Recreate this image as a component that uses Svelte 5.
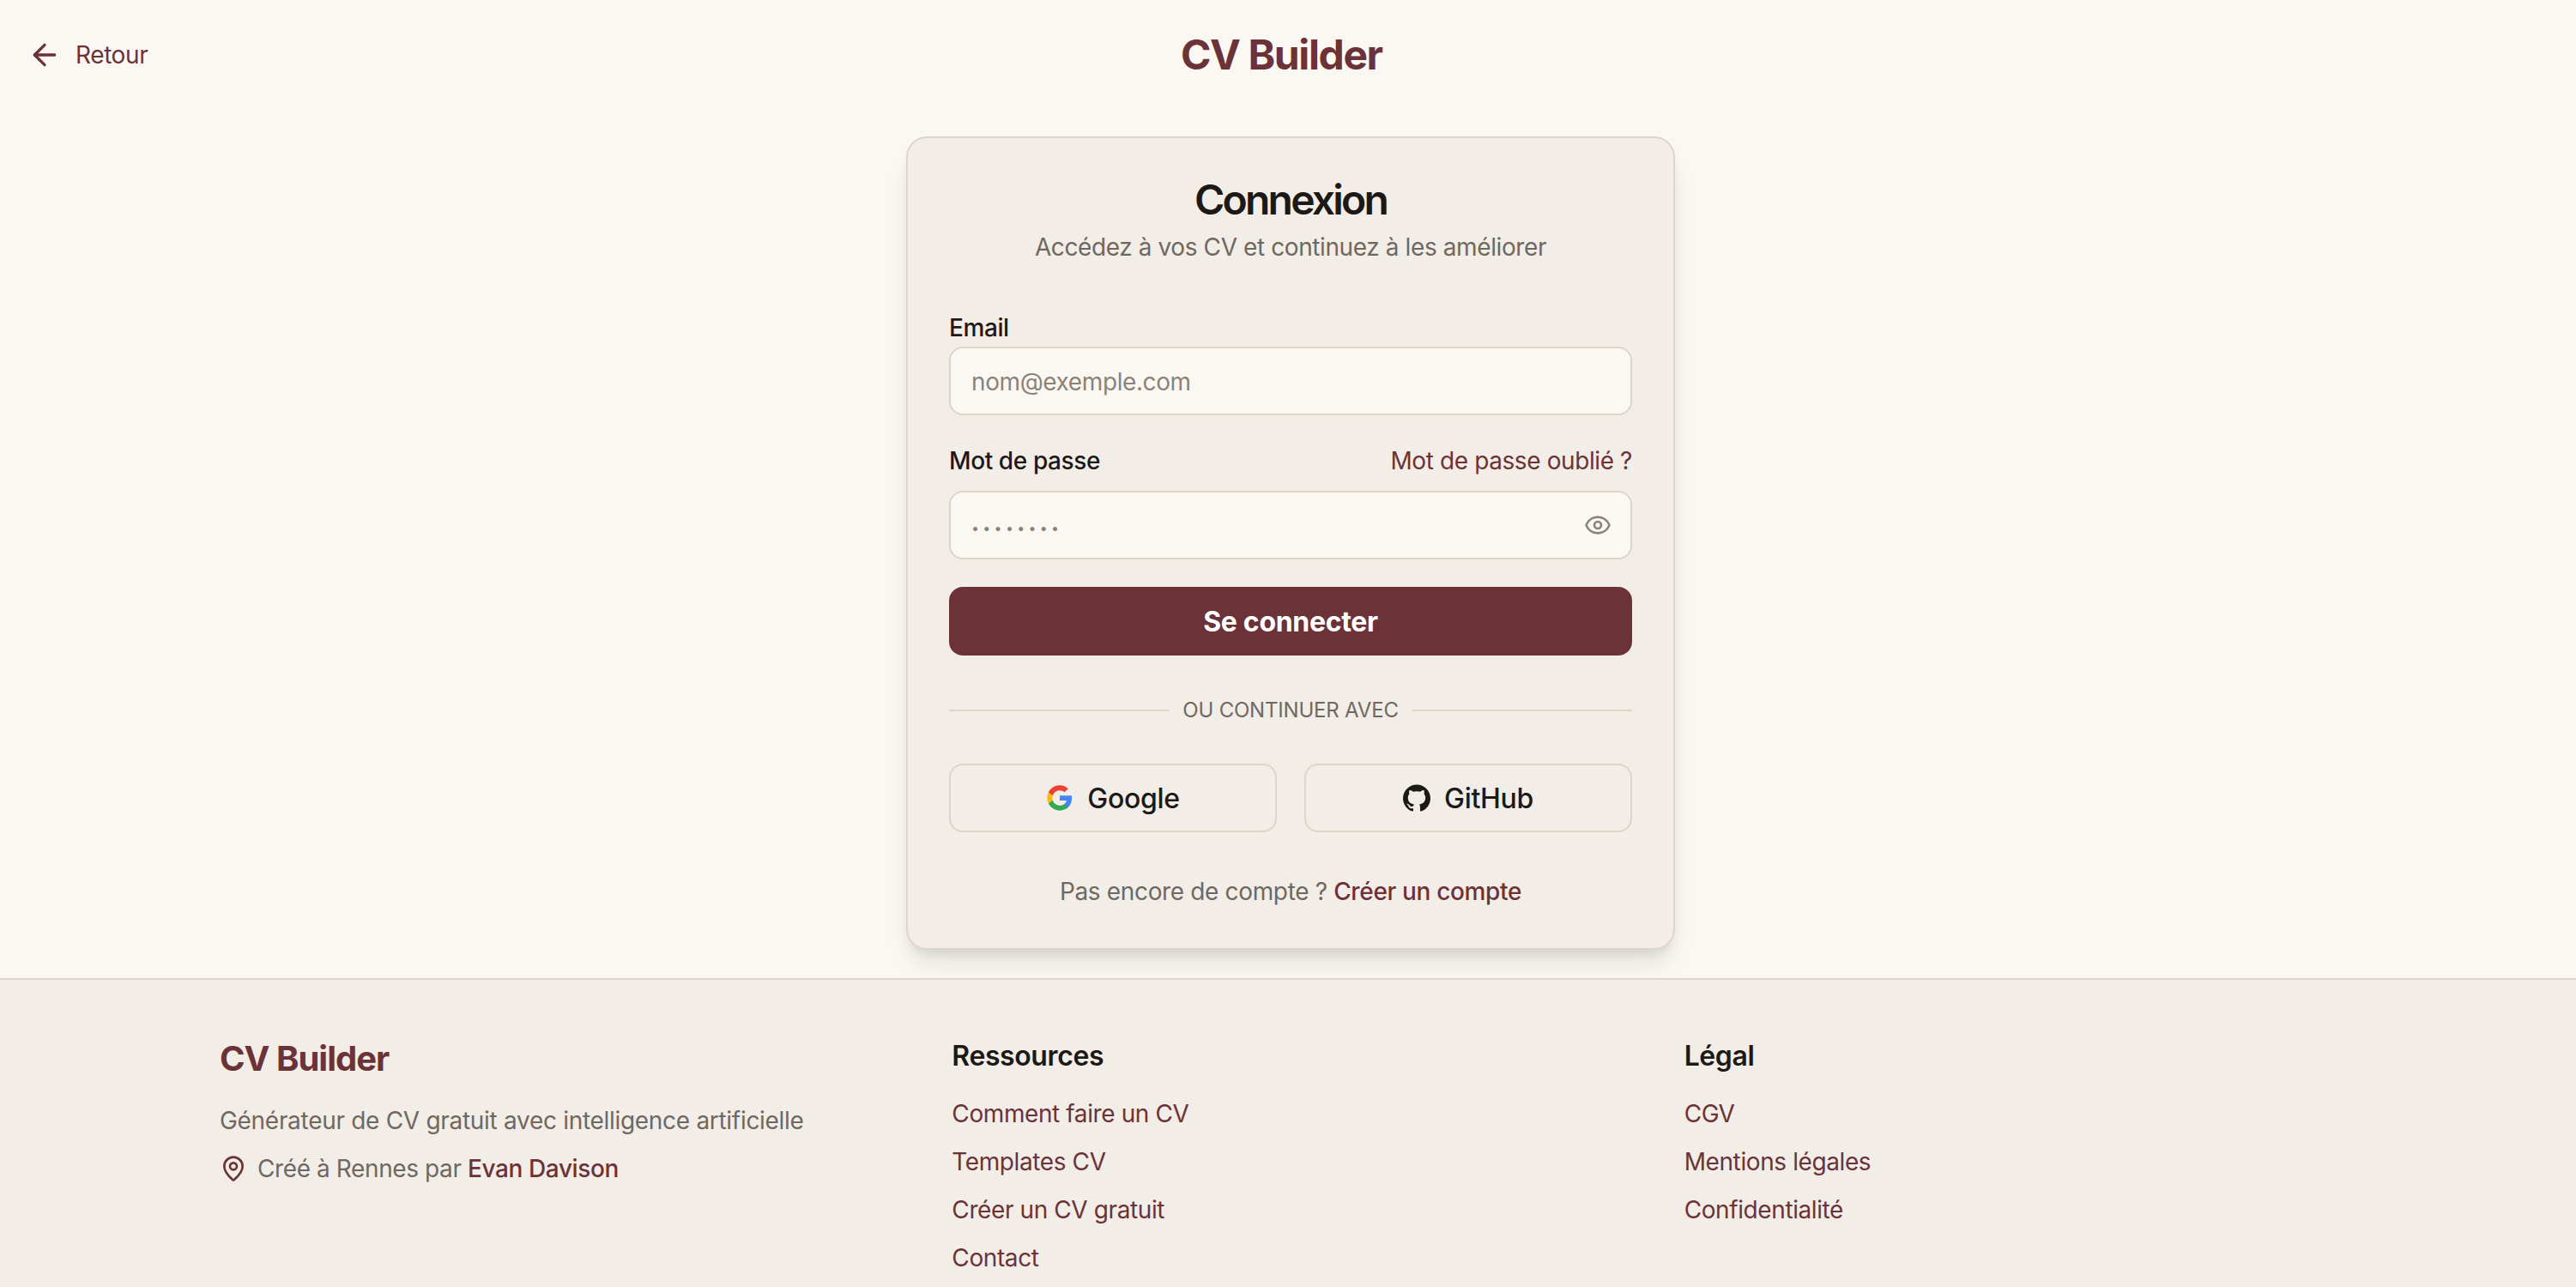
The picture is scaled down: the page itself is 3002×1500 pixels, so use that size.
<script lang="ts">
  const resources = ['Comment faire un CV', 'Templates CV', 'Créer un CV gratuit', 'Contact'];
  const legal = ['CGV', 'Mentions légales', 'Confidentialité'];
</script>

<div class="page">
  <header class="topbar">
    <a class="back" href="#retour">
      <svg width="40" height="40" viewBox="0 0 24 24" fill="none" stroke="currentColor" stroke-width="2" stroke-linecap="round" stroke-linejoin="round">
        <path d="m12 19-7-7 7-7" />
        <path d="M19 12H5" />
      </svg>
      <span>Retour</span>
    </a>
    <div class="brand">CV Builder</div>
  </header>

  <main class="main">
    <section class="card">
      <h1>Connexion</h1>
      <p class="subtitle">Accédez à vos CV et continuez à les améliorer</p>

      <div class="field email-field">
        <label for="email">Email</label>
        <input id="email" type="email" placeholder="nom@exemple.com" />
      </div>

      <div class="field">
        <div class="label-row">
          <label for="password">Mot de passe</label>
          <a href="#oublie">Mot de passe oublié ?</a>
        </div>
        <div class="password-wrap">
          <input id="password" type="password" placeholder="••••••••" />
          <svg class="eye" width="32" height="32" viewBox="0 0 24 24" fill="none" stroke="currentColor" stroke-width="2" stroke-linecap="round" stroke-linejoin="round">
            <path d="M2.06 12.35a1 1 0 0 1 0-.7 10.75 10.75 0 0 1 19.88 0 1 1 0 0 1 0 .7 10.75 10.75 0 0 1-19.88 0" />
            <circle cx="12" cy="12" r="3" />
          </svg>
        </div>
      </div>

      <button class="submit" type="button">Se connecter</button>

      <div class="divider"><span>OU CONTINUER AVEC</span></div>

      <div class="oauth">
        <button type="button">
          <svg width="32" height="32" viewBox="0 0 24 24">
            <path fill="#4285F4" d="M22.56 12.25c0-.78-.07-1.53-.2-2.25H12v4.26h5.92c-.26 1.37-1.04 2.53-2.21 3.31v2.77h3.57c2.08-1.92 3.28-4.74 3.28-8.09z" />
            <path fill="#34A853" d="M12 23c2.97 0 5.46-.98 7.28-2.66l-3.57-2.77c-.98.66-2.23 1.06-3.71 1.06-2.86 0-5.29-1.93-6.16-4.53H2.18v2.84C3.99 20.53 7.7 23 12 23z" />
            <path fill="#FBBC05" d="M5.84 14.09c-.22-.66-.35-1.36-.35-2.09s.13-1.43.35-2.09V7.07H2.18C1.43 8.55 1 10.22 1 12s.43 3.45 1.18 4.93l2.85-2.22.81-.62z" />
            <path fill="#EA4335" d="M12 5.38c1.62 0 3.06.56 4.21 1.64l3.15-3.15C17.45 2.09 14.97 1 12 1 7.7 1 3.99 3.47 2.18 7.07l3.66 2.84c.87-2.6 3.3-4.53 6.16-4.53z" />
          </svg>
          Google
        </button>
        <button type="button">
          <svg width="32" height="32" viewBox="0 0 24 24" fill="currentColor">
            <path d="M12 .297c-6.63 0-12 5.373-12 12 0 5.303 3.438 9.8 8.205 11.385.6.113.82-.258.82-.577 0-.285-.01-1.04-.015-2.04-3.338.724-4.042-1.61-4.042-1.61C4.422 18.07 3.633 17.7 3.633 17.7c-1.087-.744.084-.729.084-.729 1.205.084 1.838 1.236 1.838 1.236 1.07 1.835 2.809 1.305 3.495.998.108-.776.417-1.305.76-1.605-2.665-.3-5.466-1.332-5.466-5.93 0-1.31.465-2.38 1.235-3.22-.135-.303-.54-1.523.105-3.176 0 0 1.005-.322 3.3 1.23.96-.267 1.98-.399 3-.405 1.02.006 2.04.138 3 .405 2.28-1.552 3.285-1.23 3.285-1.23.645 1.653.24 2.873.12 3.176.765.84 1.23 1.91 1.23 3.22 0 4.61-2.805 5.625-5.475 5.92.42.36.81 1.096.81 2.22 0 1.606-.015 2.896-.015 3.286 0 .315.21.69.825.57C20.565 22.092 24 17.592 24 12.297c0-6.627-5.373-12-12-12" />
          </svg>
          GitHub
        </button>
      </div>

      <p class="signup">Pas encore de compte ? <a href="#creer">Créer un compte</a></p>
    </section>
  </main>

  <footer class="footer">
    <div class="col">
      <div class="footer-brand">CV Builder</div>
      <p class="tagline">Générateur de CV gratuit avec intelligence artificielle</p>
      <p class="made">
        <svg width="32" height="32" viewBox="0 0 24 24" fill="none" stroke="#6b3338" stroke-width="2" stroke-linecap="round" stroke-linejoin="round">
          <path d="M20 10c0 4.993-5.539 10.193-7.399 11.799a1 1 0 0 1-1.202 0C9.539 20.193 4 14.993 4 10a8 8 0 0 1 16 0" />
          <circle cx="12" cy="10" r="3" />
        </svg>
        <span>Créé à Rennes par <a href="#evan">Evan Davison</a></span>
      </p>
    </div>
    <nav class="col">
      <h2>Ressources</h2>
      <ul>
        {#each resources as item}
          <li><a href="#r">{item}</a></li>
        {/each}
      </ul>
    </nav>
    <nav class="col">
      <h2>Légal</h2>
      <ul>
        {#each legal as item}
          <li><a href="#l">{item}</a></li>
        {/each}
      </ul>
    </nav>
  </footer>
</div>

<style>
  :global(body) {
    margin: 0;
    background: #fbf8f3;
    font-family: Inter, "Liberation Sans", sans-serif;
    color: #1c1917;
    letter-spacing: -0.4px;
  }

  a {
    color: #6b3338;
    text-decoration: none;
  }

  .page {
    height: 1500px;
    overflow: hidden;
    display: flex;
    flex-direction: column;
  }

  .topbar {
    height: 127px;
    flex-shrink: 0;
    box-sizing: border-box;
    display: flex;
    align-items: center;
    padding: 0 32px;
  }

  .back {
    display: flex;
    align-items: center;
    gap: 16px;
    font-size: 28px;
    width: 1344px;
  }

  .brand {
    font-size: 48px;
    font-weight: 700;
    letter-spacing: -1.4px;
    color: #6b3338;
  }

  .main {
    height: 1013px;
    flex-shrink: 0;
    display: flex;
    justify-content: center;
    align-items: flex-start;
    padding: 32px 0 0 6px;
    box-sizing: border-box;
  }

  .card {
    width: 896px;
    height: 948px;
    box-sizing: border-box;
    padding: 48px;
    background: #f2ede7;
    border: 2px solid #ddd6c8;
    border-radius: 24px;
    box-shadow: 0 20px 30px -6px rgba(0, 0, 0, 0.1), 0 8px 12px -4px rgba(0, 0, 0, 0.08);
  }

  h1 {
    margin: 0;
    text-align: center;
    font-size: 48px;
    line-height: 48px;
    font-weight: 600;
    letter-spacing: -2.8px;
  }

  .subtitle {
    margin: 11px 0 0;
    text-align: center;
    font-size: 28px;
    line-height: 40px;
    color: #6f6860;
  }

  .field label {
    display: block;
    font-size: 28px;
    line-height: 40px;
    font-weight: 500;
  }

  .email-field {
    margin-top: 54px;
  }

  .email-field label {
    margin-bottom: 2px;
  }

  input {
    display: block;
    width: 100%;
    height: 80px;
    box-sizing: border-box;
    padding: 2px 24px 0;
    background: #fbf8f3;
    border: 2px solid #ddd6c8;
    border-radius: 16px;
    font-family: inherit;
    font-size: 28px;
    letter-spacing: -0.4px;
    color: #1c1917;
    outline: none;
  }

  input::placeholder {
    color: #8b8378;
    opacity: 1;
  }

  #password {
    font-size: 16px;
    letter-spacing: 4.3px;
    padding-top: 6px;
  }

  .label-row {
    display: flex;
    justify-content: space-between;
    align-items: center;
    margin-top: 33px;
    margin-bottom: 15px;
    font-size: 28px;
    line-height: 40px;
  }

  .password-wrap {
    position: relative;
  }

  .eye {
    position: absolute;
    right: 24px;
    top: 24px;
    color: #8b8378;
  }

  .submit {
    display: block;
    width: 100%;
    height: 80px;
    margin-top: 32px;
    background: #6b3338;
    border: none;
    border-radius: 16px;
    color: #fff;
    font-family: inherit;
    font-size: 32px;
    font-weight: 700;
    letter-spacing: -0.3px;
  }

  .divider {
    display: flex;
    align-items: center;
    gap: 16px;
    margin-top: 48px;
    font-size: 24px;
    line-height: 32px;
    letter-spacing: -0.2px;
    color: #6f6860;
  }

  .divider::before,
  .divider::after {
    content: '';
    flex: 1;
    height: 2px;
    background: #ddd6c8;
  }

  .oauth {
    display: grid;
    grid-template-columns: 1fr 1fr;
    gap: 32px;
    margin-top: 46px;
  }

  .oauth button {
    display: flex;
    align-items: center;
    justify-content: center;
    gap: 16px;
    height: 80px;
    background: transparent;
    border: 2px solid #ddd6c8;
    border-radius: 16px;
    color: #1c1917;
    font-family: inherit;
    font-size: 32px;
    font-weight: 500;
    letter-spacing: -0.3px;
  }

  .signup {
    margin: 49px 0 0;
    text-align: center;
    font-size: 28px;
    line-height: 40px;
    letter-spacing: -0.35px;
    color: #6f6860;
  }

  .signup a {
    font-weight: 500;
  }

  .footer {
    flex: 1;
    display: grid;
    grid-template-columns: repeat(3, 1fr);
    gap: 70px;
    padding: 64px 256px 0;
    background: #f2ede7;
    border-top: 2px solid #ddd6c8;
  }

  .footer-brand {
    font-size: 40px;
    line-height: 56px;
    font-weight: 700;
    letter-spacing: -1px;
    color: #6b3338;
  }

  .tagline {
    margin: 24px 0 0;
    font-size: 28px;
    line-height: 40px;
    letter-spacing: -0.3px;
    color: #6f6860;
  }

  .made {
    display: flex;
    align-items: center;
    gap: 12px;
    margin: 16px 0 0;
    font-size: 28px;
    line-height: 40px;
    color: #6f6860;
  }

  .made a {
    font-weight: 500;
  }

  h2 {
    margin: 0;
    padding-top: 1px;
    font-size: 32px;
    line-height: 48px;
    font-weight: 600;
  }

  ul {
    list-style: none;
    margin: 23px 0 0;
    padding: 0;
  }

  li {
    font-size: 28px;
    line-height: 40px;
    margin-bottom: 16px;
  }
</style>
